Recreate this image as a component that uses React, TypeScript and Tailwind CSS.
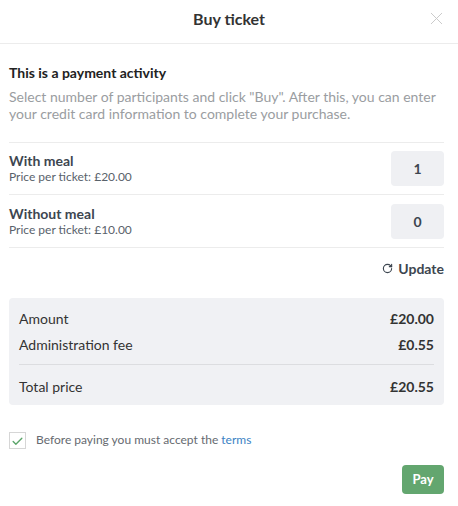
import { RotateCw, X, Check } from 'lucide-react'

const tickets = [
  { name: 'With meal', price: '£20.00', qty: 1 },
  { name: 'Without meal', price: '£10.00', qty: 0 },
]

export default function App() {
  return (
    <div className="w-[458px] h-[506px] bg-white text-[#3d4650]" style={{ fontFamily: 'Lato, "Noto Sans", sans-serif' }}>
      <div className="relative flex h-[44px] items-center justify-center border-b border-[#ececec]">
        <h2 className="mt-[-5px] text-[16px] font-bold text-[#333]">Buy ticket</h2>
        <X className="absolute right-[11px] top-[8px] h-[21px] w-[21px] text-[#c9c9c9]" strokeWidth={1.1} />
      </div>

      <div className="pl-[9px] pr-[14px]">
        <div className="pt-[20px]">
          <h3 className="text-[14px] font-bold leading-[17px] text-[#222]">This is a payment activity</h3>
          <p className="mt-[7px] text-[14px] leading-[17px] text-[#9a9da1]">
            Select number of participants and click "Buy". After this, you can enter your credit card information to complete your purchase.
          </p>
        </div>

        <div className="mt-[20px] border-t border-[#ececec]">
          {tickets.map((t, i) => (
            <div key={t.name} className={`flex items-center justify-between border-b border-[#ececec] ${i === 0 ? 'h-[52px]' : 'h-[53px]'}`}>
              <div>
                <div className="text-[14px] font-bold leading-[17px] text-[#3d4650]">{t.name}</div>
                <div className="text-[12px] leading-[16px] text-[#59626b]">Price per ticket: {t.price}</div>
              </div>
              <div className="flex h-[35px] w-[53px] items-center justify-center rounded-[4px] bg-[#eff0f3] text-[14px] font-bold text-[#3d4650]">
                {t.qty}
              </div>
            </div>
          ))}
        </div>

        <div className="flex justify-end pt-[10px]">
          <button className="flex items-center gap-[5px] text-[14px] font-bold text-[#3d4650]">
            <RotateCw className="h-[11px] w-[11px]" strokeWidth={2.5} />
            Update
          </button>
        </div>

        <div className="mt-[19px] rounded-[4px] bg-[#f0f1f4] px-[10px] pt-[7px] pb-[6px] text-[14px] text-[#333]">
          <div className="flex h-[26px] items-center justify-between">
            <span>Amount</span>
            <span className="font-bold">£20.00</span>
          </div>
          <div className="flex h-[26px] items-center justify-between">
            <span>Administration fee</span>
            <span className="font-bold">£0.55</span>
          </div>
          <div className="mt-[7px] mb-[8px] border-t border-[#dcdde0]" />
          <div className="flex h-[26px] items-center justify-between">
            <span>Total price</span>
            <span className="font-bold">£20.55</span>
          </div>
        </div>

        <label className="mt-[27px] flex items-start gap-[10px]">
          <span className="flex h-[17px] w-[17px] items-center justify-center border border-[#d6d6d6] bg-white">
            <Check className="mt-[2px] h-[13px] w-[13px] text-[#5aa469]" strokeWidth={2.5} />
          </span>
          <span className="text-[12px] leading-[15px] text-[#666a70]">
            Before paying you must accept the <a className="text-[#3b82c4]">terms</a>
          </span>
        </label>

        <div className="mt-[16px] flex justify-end">
          <button className="h-[29px] w-[42px] rounded-[4px] bg-[#63a66f] text-[13px] font-bold text-white">Pay</button>
        </div>
      </div>
    </div>
  )
}
